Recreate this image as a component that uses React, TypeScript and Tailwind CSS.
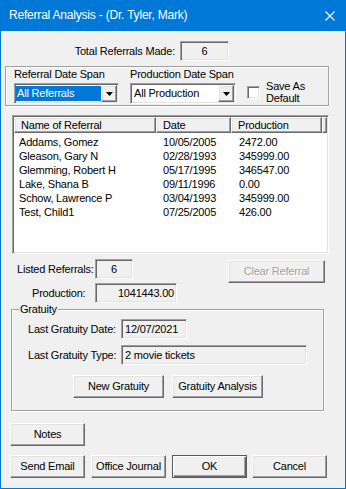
import React from 'react';

const raised =
  'border border-t-white border-l-white border-r-[#696969] border-b-[#696969] shadow-[inset_-1px_-1px_0_#a0a0a0,inset_1px_1px_0_#e3e3e3]';
const sunken =
  'border border-t-[#a0a0a0] border-l-[#a0a0a0] border-r-white border-b-white shadow-[inset_1px_1px_0_#696969,inset_-1px_-1px_0_#e3e3e3]';
const etched = 'border border-[#a0a0a0] shadow-[inset_1px_1px_0_#fff,1px_1px_0_#fff]';

const referrals = [
  { name: 'Addams, Gomez', date: '10/05/2005', prod: '2472.00' },
  { name: 'Gleason, Gary N', date: '02/28/1993', prod: '345999.00' },
  { name: 'Glemming, Robert H', date: '05/17/1995', prod: '346547.00' },
  { name: 'Lake, Shana B', date: '09/11/1996', prod: '0.00' },
  { name: 'Schow, Lawrence P', date: '03/04/1993', prod: '345999.00' },
  { name: 'Test, Child1', date: '07/25/2005', prod: '426.00' },
];

const Btn: React.FC<{ label: string; className?: string; disabled?: boolean }> = ({ label, className = '', disabled }) => (
  <button
    className={`${raised} bg-[#f0f0f0] h-[23px] flex items-center justify-center shrink-0 ${
      disabled ? 'text-[#a0a0a0] [text-shadow:1px_1px_0_#fff]' : 'text-black'
    } ${className}`}
  >
    {label}
  </button>
);

const Field: React.FC<{ value: string; className?: string }> = ({ value, className = '' }) => (
  <div className={`${sunken} bg-[#f0f0f0] h-[20px] flex items-center shrink-0 ${className}`}>{value}</div>
);

const Arrow = () => (
  <svg width="7" height="4" viewBox="0 0 7 4">
    <path d="M0 0h7L3.5 4z" fill="#000" />
  </svg>
);

const Combo: React.FC<{ value: string; selected?: boolean }> = ({ value, selected }) => (
  <div className={`${sunken} bg-white h-[21px] p-[1px] flex`}>
    <div className="flex-1 py-[1px]">
      <div className={`h-full flex items-center pl-[1px] ${selected ? 'bg-[#0078d7] text-white' : 'text-black pl-[2px]'}`}>{value}</div>
    </div>
    <div className={`${raised} bg-[#f0f0f0] w-[16px] flex items-center justify-center`}>
      <Arrow />
    </div>
  </div>
);

export default function App() {
  return (
    <div className="w-[346px] h-[489px] bg-[#0078d7] flex flex-col font-['Liberation_Sans',Arial,sans-serif] text-[11px] leading-[13px] tracking-[-0.2px] text-black">
      {/* title bar */}
      <div className="h-[31px] flex items-center justify-between pl-[9px] pr-[11px] text-white text-[12px] shrink-0">
        <span>Referral Analysis - (Dr. Tyler, Mark)</span>
        <svg width="10" height="10" viewBox="0 0 10 10">
          <path d="M0.5 0.5l9 9M9.5 0.5l-9 9" stroke="#fff" strokeWidth="1.1" />
        </svg>
      </div>

      <div className="flex-1 mx-[1px] mb-[1px] bg-[#f0f0f0] flex flex-col">
        <div className="flex items-center mt-[10px]">
          <div className="w-[174px] text-right">Total Referrals Made:</div>
          <Field value="6" className="ml-[5px] w-[49px] justify-center" />
        </div>

        {/* date spans */}
        <div className={`${etched} ml-[4px] w-[324px] h-[40px] mt-[5px] pl-[8px] pt-[1px] flex`}>
          <div className="w-[105px] flex flex-col">
            <div>Referral Date Span</div>
            <div className="mt-[2px]">
              <Combo value="All Referrals" selected />
            </div>
          </div>
          <div className="w-[106px] ml-[11px] flex flex-col">
            <div>Production Date Span</div>
            <div className="mt-[2px]">
              <Combo value="All Production" />
            </div>
          </div>
          <div className="ml-[11px] mt-[12px] flex items-center h-[24px]">
            <div className={`${sunken} bg-white w-[13px] h-[13px]`} />
            <div className="ml-[6px] leading-[12px]">
              <div>Save As</div>
              <div>Default</div>
            </div>
          </div>
        </div>

        {/* list */}
        <div className={`${sunken} bg-white ml-[11px] w-[317px] h-[139px] mt-[9px] p-[1px] flex flex-col`}>
          <div className="flex h-[16px] shrink-0">
            <div className={`${raised} bg-[#f0f0f0] w-[142px] pl-[6px] flex items-center`}>Name of Referral</div>
            <div className={`${raised} bg-[#f0f0f0] w-[75px] pl-[6px] flex items-center`}>Date</div>
            <div className={`${raised} bg-[#f0f0f0] w-[91px] pl-[6px] flex items-center`}>Production</div>
            <div className={`${raised} bg-[#f0f0f0] flex-1`} />
          </div>
          <div className="pt-[2px]">
            {referrals.map(r => (
              <div key={r.name} className="flex h-[14px] items-center">
                <div className="w-[149px] pl-[5px]">{r.name}</div>
                <div className="w-[76px]">{r.date}</div>
                <div>{r.prod}</div>
              </div>
            ))}
          </div>
        </div>

        {/* totals */}
        <div className="flex items-start mt-[5px]">
          <div className="w-[94px] pl-[16px] h-[20px] flex items-center">Listed Referrals:</div>
          <Field value="6" className="w-[38px] justify-center" />
          <Btn label="Clear Referral" disabled className="ml-[95px] mt-[1px] w-[97px]" />
        </div>
        <div className="flex items-center">
          <div className="w-[94px] pl-[31px]">Production:</div>
          <Field value="1041443.00" className="w-[82px] justify-end pr-[2px]" />
        </div>

        {/* gratuity */}
        <div className={`${etched} relative ml-[10px] w-[313px] mt-[6px] pt-[9px] pb-[12px] flex flex-col`}>
          <span className="absolute -top-[7px] left-[7px] px-[1px] bg-[#f0f0f0]">Gratuity</span>
          <div className="flex items-center">
            <div className="w-[109px] pl-[16px]">Last Gratuity Date:</div>
            <Field value="12/07/2021" className="w-[66px] pl-[3px]" />
          </div>
          <div className="flex items-center mt-[6px]">
            <div className="w-[109px] pl-[16px]">Last Gratuity Type:</div>
            <Field value="2 movie tickets" className="w-[186px] pl-[3px]" />
          </div>
          <div className="flex mt-[10px] ml-[61px] gap-[8px]">
            <Btn label="New Gratuity" className="w-[91px]" />
            <Btn label="Gratuity Analysis" className="w-[91px]" />
          </div>
        </div>

        <Btn label="Notes" className="ml-[9px] mt-[12px] w-[75px]" />

        <div className="flex mt-[9px] ml-[9px]">
          <Btn label="Send Email" className="w-[75px]" />
          <Btn label="Office Journal" className="w-[75px] ml-[6px]" />
          <button className="ml-[6px] w-[75px] h-[23px] border border-[#5a5a5a] bg-[#f0f0f0] shadow-[inset_1px_1px_0_#fff,inset_-1px_-1px_0_#696969,inset_-2px_-2px_0_#a0a0a0] flex items-center justify-center">
            OK
          </button>
          <Btn label="Cancel" className="w-[75px] ml-[5px]" />
        </div>
      </div>
    </div>
  );
}
